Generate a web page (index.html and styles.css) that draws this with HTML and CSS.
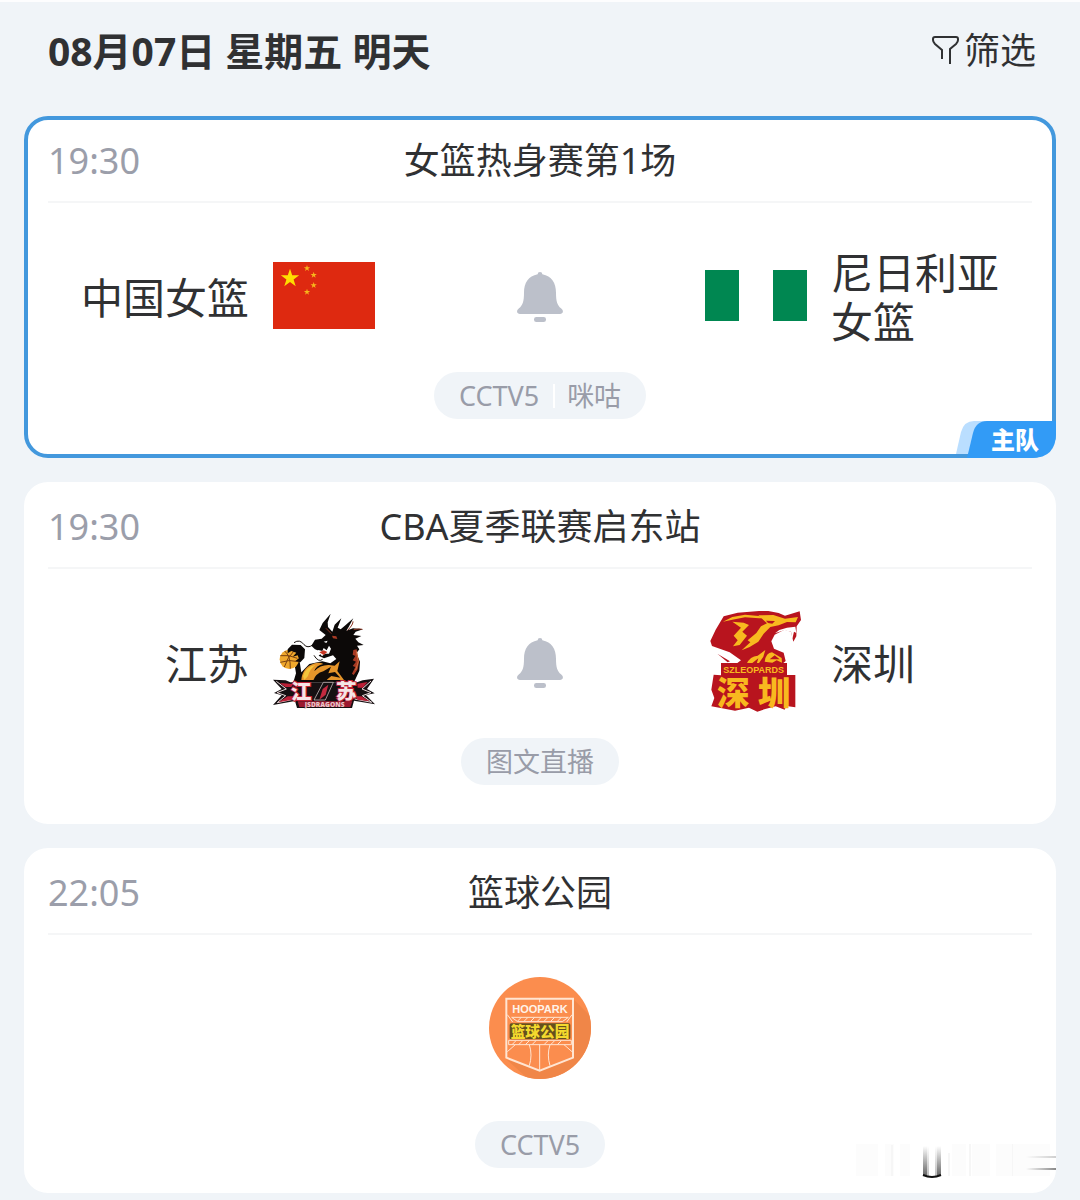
FILE: index.html
```html
<!DOCTYPE html>
<html lang="zh-CN">
<head>
  <meta charset="UTF-8">
  <meta name="viewport" content="width=device-width, initial-scale=1.0">
  <title>赛程</title>
  <link rel="stylesheet" href="styles.css">
</head>
<body>
  <!-- Shared icons -->
  <svg class="sprite" aria-hidden="true">
    <symbol id="bell" viewBox="30 18 180 180">
      <path d="M113 43Q113 36 120 36Q127 36 127 43C155 48 168 70 168 98C168 125 172 135 183 145C192 152 190 162 180 162H60C50 162 48 152 57 145C68 135 72 125 72 98C72 70 85 48 113 43Z"/>
      <rect x="102" y="171" width="36" height="15" rx="7"/>
    </symbol>
    <symbol id="star" viewBox="-10 -10 20 20">
      <path d="M0-10L2.3-3.1H9.5L3.7 1.2L5.9 8.1L0 3.8L-5.9 8.1L-3.7 1.2L-9.5-3.1H-2.3Z"/>
    </symbol>
  </svg>

  <header class="date-bar">
    <h1>08月07日 星期五 明天</h1>
    <button class="filter-btn" type="button">
      <svg viewBox="0 0 28 30" aria-hidden="true">
        <path d="M10 23V14L3 8Q1 6 1 4V3Q1 1 3 1H24Q26 1 26 3V4Q26 6 24 8L18 13V28"/>
      </svg>筛选</button>
  </header>

  <main class="matches">
    <!-- China vs Nigeria -->
    <article class="card home">
      <div class="card-head">
        <time>19:30</time>
        <h2>女篮热身赛第1场</h2>
      </div>
      <div class="versus">
        <div class="team left">
          <span class="name">中国女篮</span>
          <svg class="logo" viewBox="39 -15 306 306" aria-hidden="true">
            <rect x="39" y="36" width="306" height="201" fill="#de2910"/>
            <g fill="#ffde00">
              <use href="#star" x="61" y="56" width="58" height="58"/>
              <g fill="#f6b51c">
                <use href="#star" x="131" y="45" width="20" height="20"/>
                <use href="#star" x="151" y="65" width="20" height="20"/>
                <use href="#star" x="151" y="96" width="20" height="20"/>
                <use href="#star" x="131" y="116" width="20" height="20"/>
              </g>
            </g>
          </svg>
        </div>
        <button class="bell" type="button" aria-label="提醒"><svg><use href="#bell"/></svg></button>
        <div class="team right">
          <svg class="logo" viewBox="0 0 102 102" aria-hidden="true">
            <path fill="#008751" d="M0 25H34V76H0ZM68 25H102V76H68Z"/>
          </svg>
          <span class="name">尼日利亚女篮</span>
        </div>
      </div>
      <div class="channels"><span>CCTV5</span><span>咪咕</span></div>
      <div class="home-tag">
        <svg viewBox="0 0 100 37" aria-hidden="true">
          <path fill="#badeff" d="M0 33L5 11Q8 0 18 0H40V33Z"/>
          <path fill="#329bf6" d="M11 37L17 12Q20 0 31 0H100V12Q100 37 76 37Z"/>
        </svg>
        <span>主队</span>
      </div>
    </article>

    <!-- Jiangsu vs Shenzhen -->
    <article class="card">
      <div class="card-head">
        <time>19:30</time>
        <h2>CBA夏季联赛启东站</h2>
      </div>
      <div class="versus">
        <div class="team left">
          <span class="name">江苏</span>
          <svg class="logo" viewBox="39 36 306 306" aria-hidden="true">
            <!-- body and mane -->
            <path fill="#0c0908" d="M154 140L165 122L185 119L197 108L178 93L188 72L212 44L203 70L204 84L217 98L224 77L244 58L233 86L242 91L258 77L280 58L266 84L259 95L279 88L309 91L287 98L280 108L304 111L286 119L295 130L311 138L291 140L298 151L289 163L300 188L298 215L282 250H100L108 223L101 180L118 139L132 149L131 174L119 188L124 220L148 195L187 187L211 193L229 180L219 169L192 178L176 170L186 159L165 151Z"/>
            <!-- golden belly -->
            <path fill="#e6952a" d="M124 243C126 218 139 201 164 193Q179 188 190 195Q168 199 163 217Q181 197 207 198L224 200L239 187L232 216L252 243H202L190 232L174 243Z"/>
            <path fill="#f4c63c" d="M129 231Q137 204 167 197Q149 210 144 231L133 243Z"/>
            <path fill="#120b07" d="M159 246Q167 223 190 217L213 203L205 223L225 219L241 236L214 231L196 246Z"/>
            <!-- scales down the neck -->
            <path fill="#a73a24" d="M216 110L229 112L232 120L219 118ZM280 153L290 151L297 189L293 211L281 228L276 224L286 204L278 201L288 188L278 184L286 171L278 167Z"/>
            <path fill="none" stroke="#8a3320" stroke-width="3" d="M198 88L214 104M263 94Q280 76 279 67M281 92Q300 88 307 91"/>
            <path fill="none" stroke="#e08a4a" stroke-width="2" d="M289 157L295 188L287 213"/>
            <!-- jaws and whiskers -->
            <path fill="#fff" d="M164 150L170 160L175 153L187 156L191 147L200 154L207 140L213 149L207 164L195 164L186 172L181 166L174 169L166 162Z"/>
            <path fill="#c83724" d="M178 160L191 154L202 159L191 168Z"/>
            <path fill="none" stroke="#16100d" stroke-width="3" d="M158 138Q143 149 132 137Q119 119 102 131M188 181Q175 191 162 169"/>
            <path fill="#fff" d="M191 128L203 125L199 132Z"/>
            <!-- ball in claw -->
            <circle cx="88" cy="181" r="29" fill="#efa82c"/>
            <path fill="none" stroke="#7b4211" stroke-width="3" d="M61 170Q87 166 112 178M61 190Q88 180 115 188M74 156Q92 171 91 209M101 157Q81 177 73 204"/>
            <path fill="#0c0908" d="M83 151L96 137L122 138L135 151L133 177L121 190L106 186L117 178L113 169L98 173L109 161L94 156L83 163Z"/>
            <!-- name plate -->
            <path fill="#161012" d="M39 242L77 244L91 250H291L308 244L342 239L321 270L344 283L318 288L345 316L282 305L276 327H111L105 306L39 318L65 289L42 282L65 270Z"/>
            <path fill="none" stroke="#e9dadb" stroke-width="3" d="M49 247L79 270L51 281L77 290L52 311L104 300M333 246L306 270L333 281L307 290L335 310L284 300"/>
            <path fill="#bd2037" d="M59 252L100 255L94 264H76ZM292 254L323 249L308 266H293ZM55 310L83 292H102L97 302ZM329 307L304 292H287L292 302Z"/>
            <path fill="#9c1930" d="M113 307H277L271 324H118Z"/>
            <g class="jiangsu-name">
              <text x="92" y="299">江</text>
              <text x="228" y="299">苏</text>
            </g>
            <path fill="#161012" stroke="#e9dadb" stroke-width="2" d="M162 303L190 250H220L196 303Z"/>
            <path fill="#c42a40" d="M188 270L205 257L197 287L178 302Z"/>
            <text class="jiangsu-sub" x="194" y="324">JSDRAGONS</text>
          </svg>
        </div>
        <button class="bell" type="button" aria-label="提醒"><svg><use href="#bell"/></svg></button>
        <div class="team right">
          <svg class="logo" viewBox="30 36 306 306" aria-hidden="true">
            <!-- head -->
            <path fill="#b8141e" d="M46 126L62 92L86 52L128 41L192 36L220 36L251 42L270 50L314 37L318 63L305 82L304 112L295 128L288 98L268 92L239 107L229 127L237 149L266 161L272 186L257 199H118L138 184L104 160L51 141Z"/>
            <path fill="#f8b91f" d="M84 68L112 54L150 47L192 51L212 58L192 58L150 55L112 62Z"/>
            <path fill="#f8b91f" d="M112 68L146 71L162 78L142 98L156 110L134 138L114 142L128 124L116 110L138 86Z"/>
            <path fill="#f8b91f" d="M190 49L235 48L270 59L309 54L302 70L276 69L251 79L226 84L206 104L190 128L164 144L140 154L166 130L158 124L184 102L198 82L216 73Z"/>
            <path fill="#b8141e" d="M213 65L240 66L232 74L219 72Z"/>
            <path fill="#fff" d="M240 103L267 94L288 98L292 119L297 98L304 102L301 83L276 86L253 93Z"/>
            <path fill="#f8b91f" d="M155 194Q165 172 188 170L211 153L205 173L190 195ZM209 188Q213 161 231 160L260 177L261 191L245 184L232 191Z"/>
            <path fill="#b8141e" d="M172 192L190 178L185 194ZM224 181L239 169L254 181ZM67 164L105 187L98 190Z"/>
            <!-- name plate -->
            <path fill="#b8141e" d="M78 192H276V228H301V325L274 321L269 332L242 322L208 331L187 338L162 326L120 335L89 329L49 322L58 297L49 272L56 227L78 229Z"/>
            <text class="leopards-sub" x="176" y="222">SZLEOPARDS</text>
            <g class="leopards-name">
              <text x="66" y="318">深</text>
              <text x="188" y="318">圳</text>
            </g>
          </svg>
          <span class="name">深圳</span>
        </div>
      </div>
      <div class="channels"><span>图文直播</span></div>
    </article>

    <!-- Hoopark show -->
    <article class="card show">
      <div class="card-head">
        <time>22:05</time>
        <h2>篮球公园</h2>
      </div>
      <svg class="logo" viewBox="27 36 306 306" aria-hidden="true">
        <clipPath id="ball"><circle cx="180" cy="189" r="153"/></clipPath>
        <circle cx="180" cy="189" r="153" fill="#fb8d4e"/>
        <path fill="#f08648" clip-path="url(#ball)" d="M80 284L145 342H333V155L279 101V280L179 318Z"/>
        <g fill="none" stroke="#ffe5d2" stroke-width="6">
          <path d="M79 101H279V278L179 317L79 278Z"/>
          <path stroke-width="3" d="M95 157H265L247 170H113ZM86 239H274V226H86ZM179 239V315M148 239Q158 270 148 302M210 239Q200 270 210 302M82 260L106 239M276 260L252 239"/>
          <path stroke-width="3" d="M112 169L124 157M132 169L144 157M152 169L164 157M172 169L184 157M192 169L204 157M212 169L224 157M232 169L244 157M96 239L108 227M116 239L128 227M136 239L148 227M156 239L168 227M192 239L204 227M212 239L224 227M232 239L244 227M82 149L98 171M276 149L260 171M179 101V112"/>
        </g>
        <text class="hoopark-sub" x="180" y="144">HOOPARK</text>
        <rect x="89" y="175" width="182" height="48" rx="5" fill="#65501e"/>
        <text class="hoopark-name" x="180" y="215">篮球公园</text>
      </svg>
      <div class="channels"><span>CCTV5</span></div>
      <!-- faint smudge over the corner -->
      <svg class="smudge" viewBox="0 0 200 36" aria-hidden="true">
        <defs>
          <linearGradient id="fade" x1="0" y1="0" x2="0" y2="1">
            <stop offset="0" stop-color="#222" stop-opacity="0"/>
            <stop offset="1" stop-color="#222"/>
          </linearGradient>
          <linearGradient id="streak">
            <stop offset="0" stop-color="#888" stop-opacity="0"/>
            <stop offset="1" stop-color="#888"/>
          </linearGradient>
        </defs>
        <path fill="#fcfcfc" d="M0 0H22V32H0ZM29 0H38V32H29ZM44 0H54V32H44ZM96 0H110V32H96ZM116 0H134V32H116ZM140 0H194V32H140Z"/>
        <path fill="#f6f6f6" d="M35 1H37V32H35ZM92 9H94V32H92ZM113 0H115V32H113ZM156 0H157V32H156Z"/>
        <path fill="url(#fade)" opacity=".7" d="M67 2H71V32H67ZM81 2H85V32H81Z"/>
        <path fill="url(#fade)" opacity=".3" d="M71 2H73V32H71ZM79 2H81V32H79Z"/>
        <path fill="none" stroke="#111" stroke-width="2" d="M67 31Q76 35 85 31"/>
        <path fill="url(#streak)" d="M170 24H200V26H170Z"/>
        <path fill="url(#streak)" opacity=".4" d="M170 12H200V14H170Z"/>
      </svg>
    </article>
  </main>
</body>
</html>
```
FILE: styles.css
```css
* {
  box-sizing: border-box;
}
body {
  margin: 0;
  border-top: 2px solid #fdfdfe;
  background: #f0f4f8;
  color: #303133;
  font-family: "Noto Sans", "Noto Sans CJK SC", sans-serif;
}
h1, h2 {
  margin: 0;
}
button {
  padding: 0;
  border: 0;
  background: none;
  color: inherit;
  font: inherit;
  cursor: pointer;
}
svg {
  display: block;
}
.sprite {
  position: absolute;
  width: 0;
  height: 0;
}

/* Date and filter */
.date-bar {
  display: flex;
  justify-content: space-between;
  align-items: center;
  padding: 20px 44px 36px 48px;
}
.date-bar h1 {
  font-size: 39px;
  line-height: 58px;
}
.filter-btn {
  display: flex;
  align-items: center;
  gap: 4px;
  font-size: 36px;
  line-height: 58px;
}
.filter-btn svg {
  width: 28px;
  height: 30px;
  fill: none;
  stroke: #303133;
  stroke-width: 2;
}

/* Match cards */
.matches {
  display: flex;
  flex-direction: column;
  gap: 24px;
  padding: 0 24px 8px;
}
.card {
  position: relative;
  padding: 0 20px 35px;
  border: 4px solid #fff;
  border-radius: 24px;
  background: #fff;
}
.card.home {
  border-color: #4398dd;
}
.card-head {
  display: grid;
  grid-template-columns: 1fr auto 1fr;
  align-items: center;
  height: 83px;
  border-bottom: 2px solid #f5f6f7;
  font-size: 36px;
  line-height: 54px;
}
.card-head time {
  color: #9b9eaa;
}
.card-head h2 {
  font-size: 36px;
  font-weight: 400;
}
.versus {
  display: grid;
  grid-template-columns: 1fr 330px 1fr;
  align-items: center;
  margin-top: 42px;
}
.team {
  display: flex;
  align-items: center;
  gap: 24px;
}
.team.left {
  justify-content: flex-end;
}
.name {
  padding-top: 2px;
  font-size: 42px;
  line-height: 49px;
}
.logo {
  flex: none;
  width: 102px;
  height: 102px;
  overflow: visible;
}
.bell {
  justify-self: center;
}
.bell svg {
  width: 60px;
  height: 60px;
  fill: #bcc0ca;
}
.channels {
  display: flex;
  width: fit-content;
  margin: 25px auto 0;
  padding: 0 25px;
  border-radius: 24px;
  background: #f0f4f8;
  color: #999ca8;
  font-size: 27px;
  line-height: 47px;
}
.channels span + span {
  margin-left: 14px;
  padding-left: 14px;
  background: linear-gradient(#fff, #fff) left center / 2px 24px no-repeat;
}

/* Home team corner tag */
.home-tag {
  position: absolute;
  right: -4px;
  bottom: -4px;
  width: 100px;
  height: 37px;
}
.home-tag span {
  position: absolute;
  inset: 0 17px 0 auto;
  color: #fff;
  font-size: 24px;
  font-weight: 900;
  line-height: 37px;
}

/* Programme without teams */
.show {
  padding-bottom: 21px;
}
.show .logo {
  margin: 42px auto 0;
}
.show .channels {
  margin-top: 42px;
}
.smudge {
  position: absolute;
  right: -4px;
  bottom: 9px;
  width: 200px;
  height: 36px;
}

/* Lettering inside the logos */
.logo text {
  font-weight: 900;
  paint-order: stroke;
}
.jiangsu-name {
  fill: #f4e4e6;
  stroke: #bd2037;
  stroke-width: 6px;
  font-size: 62px;
}
.jiangsu-sub {
  fill: #e8c4c8;
  font-size: 20px;
  text-anchor: middle;
}
.leopards-sub {
  fill: #f8b91f;
  font-family: "Liberation Sans", sans-serif;
  font-size: 27px;
  text-anchor: middle;
}
.leopards-name {
  fill: #f8b91f;
  font-size: 98px;
}
.hoopark-sub {
  fill: #fff3e9;
  font-family: "Liberation Sans", sans-serif;
  font-size: 33px;
  text-anchor: middle;
}
.hoopark-name {
  fill: #f4d92d;
  font-size: 44px;
  text-anchor: middle;
}
```
